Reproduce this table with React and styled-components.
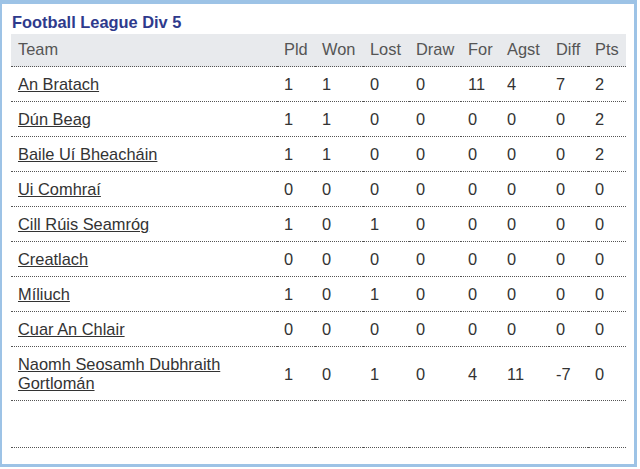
import React from "react";
import styled, { createGlobalStyle } from "styled-components";

const GlobalStyle = createGlobalStyle`
  html, body {
    margin: 0;
    padding: 0;
    background: #ffffff;
  }
  body {
    font-family: "Liberation Sans", Arial, sans-serif;
  }
`;

const Frame = styled.div`
  box-sizing: border-box;
  width: 637px;
  height: 467px;
  border-style: solid;
  border-color: #9dc3e6;
  border-width: 4px 3px 3px 2px;
  padding: 8px 8px 0 9px;
  background: #ffffff;
  overflow: hidden;
`;

const Title = styled.h2`
  margin: 0 0 2px 1px;
  font-size: 16.4px;
  line-height: 20px;
  font-weight: bold;
  color: #2e3a8c;
`;

const Table = styled.table`
  border-collapse: separate;
  border-spacing: 0;
  width: 615px;
  table-layout: fixed;
  font-size: 16.4px;
  line-height: 19px;
`;

const HeadCell = styled.th`
  box-sizing: border-box;
  text-align: left;
  font-weight: normal;
  color: #555555;
  background: #e8eaed;
  padding: 6px 7px 7px;
  border-bottom: 1px dotted #555555;
  width: ${p => p.$w}px;
`;

const Cell = styled.td`
  box-sizing: border-box;
  text-align: left;
  vertical-align: middle;
  color: #333333;
  padding: 8px 7px 7px;
  border-bottom: 1px dotted #555555;
`;

const EmptyCell = styled.td`
  height: 46px;
  padding: 0;
  border-bottom: 1px dotted #555555;
`;

const TeamLink = styled.a`
  color: #333333;
  text-decoration: underline;
  cursor: pointer;
`;

const columns = [
  ["Team", 266],
  ["Pld", 38],
  ["Won", 48],
  ["Lost", 46],
  ["Draw", 52],
  ["For", 39],
  ["Agst", 49],
  ["Diff", 39],
  ["Pts", 38],
];

const rows = [
  ["An Bratach", 1, 1, 0, 0, 11, 4, 7, 2],
  ["Dún Beag", 1, 1, 0, 0, 0, 0, 0, 2],
  ["Baile Uí Bheacháin", 1, 1, 0, 0, 0, 0, 0, 2],
  ["Ui Comhraí", 0, 0, 0, 0, 0, 0, 0, 0],
  ["Cill Rúis Seamróg", 1, 0, 1, 0, 0, 0, 0, 0],
  ["Creatlach", 0, 0, 0, 0, 0, 0, 0, 0],
  ["Míliuch", 1, 0, 1, 0, 0, 0, 0, 0],
  ["Cuar An Chlair", 0, 0, 0, 0, 0, 0, 0, 0],
  ["Naomh Seosamh Dubhraith Gortlomán", 1, 0, 1, 0, 4, 11, -7, 0],
];

export default function App() {
  return (
    <>
      <GlobalStyle />
      <Frame>
        <Title>Football League Div 5</Title>
        <Table>
          <thead>
            <tr>
              {columns.map(([label, w]) => (
                <HeadCell key={label} $w={w}>{label}</HeadCell>
              ))}
            </tr>
          </thead>
          <tbody>
            {rows.map(([team, ...stats]) => (
              <tr key={team}>
                <Cell>
                  <TeamLink>{team}</TeamLink>
                </Cell>
                {stats.map((v, i) => (
                  <Cell key={i}>{v}</Cell>
                ))}
              </tr>
            ))}
            <tr>
              {columns.map(([label]) => (
                <EmptyCell key={label} />
              ))}
            </tr>
          </tbody>
        </Table>
      </Frame>
    </>
  );
}
